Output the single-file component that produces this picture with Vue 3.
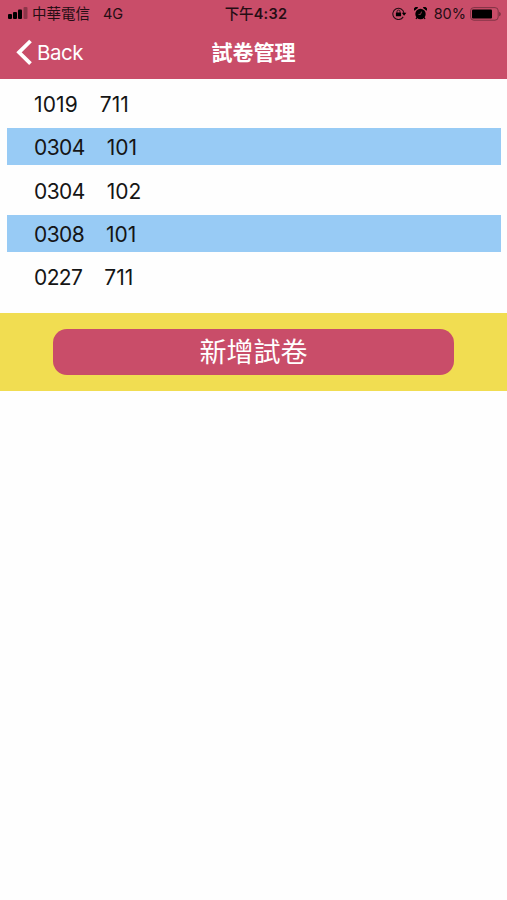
<template>
  <div class="screen">
    <header class="header">
      <div class="status-bar">
        <div class="status-left">
          <svg class="signal" width="20" height="13" viewBox="0 0 20 13">
            <rect x="0" y="7" width="4" height="5" rx="1" />
            <rect x="5" y="5" width="4" height="7" rx="1" />
            <rect x="10" y="2.5" width="4" height="9.5" rx="1" />
            <rect x="15.5" y="0" width="4" height="12" rx="1" opacity="0.3" />
          </svg>
          <span class="carrier">中華電信</span>
          <span class="network">4G</span>
        </div>
        <div class="status-time">下午<span class="clock">4:32</span></div>
        <div class="status-right">
          <svg class="lock" width="15" height="13" viewBox="0 0 15 13">
            <path
              d="M11.2 9.9A5.6 5.6 0 1 1 12 6.2"
              fill="none"
              stroke="#250d14"
              stroke-width="1.1"
            />
            <path d="M9.8 5.8h4.6L12.1 8.8z" />
            <rect x="3.9" y="5.6" width="5.2" height="3.7" rx="0.5" />
            <path
              d="M5 6V4.6a1.5 1.5 0 0 1 3 0V6"
              fill="none"
              stroke="#250d14"
              stroke-width="0.9"
            />
          </svg>
          <svg class="alarm" width="13" height="13" viewBox="0 0 13 13">
            <circle cx="6.5" cy="7" r="5.2" />
            <path d="M0.5 3.8A2.3 2.3 0 0 1 4.2 0.8zM12.5 3.8A2.3 2.3 0 0 0 8.8 0.8z" />
            <path d="M3 10.4l-1 1.6M10 10.4l1 1.6" stroke="#000" stroke-width="1.2" />
            <path d="M7.6 4.6L6.5 7.4H4.5" fill="none" stroke="#c94d69" stroke-width="0.7" />
          </svg>
          <span class="percent">80%</span>
          <svg class="battery" width="32" height="14" viewBox="0 0 32 14">
            <rect
              x="0.6"
              y="0.6"
              width="27.6"
              height="12.6"
              rx="3.2"
              fill="none"
              stroke="#76303f"
              stroke-width="0.9"
            />
            <rect x="2" y="2.4" width="20" height="9" rx="1" fill="#000" />
            <path d="M29.2 4.7c2 0.8 2 3.8 0 4.6z" fill="#76303f" />
          </svg>
        </div>
      </div>

      <nav class="nav-bar">
        <button class="back-button" type="button">
          <svg width="17" height="27" viewBox="0 0 17 27">
            <path d="M14.5 2L3 13.3L14.5 24.6" fill="none" stroke="#fff" stroke-width="3.8" />
          </svg>
          <span>Back</span>
        </button>
        <h1 class="title">試卷管理</h1>
      </nav>
    </header>

    <ul class="paper-list">
      <li
        v-for="(paper, index) in papers"
        :key="index"
        class="paper-item"
        :class="{ striped: index % 2 === 1 }"
      >
        <span class="date">{{ paper.date }}</span>
        <span>{{ paper.room }}</span>
      </li>
    </ul>

    <div class="footer">
      <button class="add-button" type="button">新增試卷</button>
    </div>
  </div>
</template>

<script setup>
import { ref } from 'vue'

const papers = ref([
  { date: '1019', room: '711' },
  { date: '0304', room: '101' },
  { date: '0304', room: '102' },
  { date: '0308', room: '101' },
  { date: '0227', room: '711' }
])
</script>

<style>
body {
  background-color: #fefefe;
}
</style>

<style scoped>
.screen {
  min-height: 900px;
  background-color: #fefefe;
  font-family: Inter, 'Noto Sans CJK TC', sans-serif;
}

.header {
  height: 79px;
  background-color: #c94d69;
}

.status-bar {
  display: grid;
  grid-template-columns: 1fr auto 1fr;
  align-items: center;
  height: 27px;
  padding: 0 5px 0 8px;
  font-size: 14.5px;
  line-height: 27px;
  color: #250d14;
}

.status-left,
.status-right {
  display: flex;
  align-items: center;
}

.status-right {
  justify-content: flex-end;
}

.carrier {
  margin-left: 4px;
}

.network {
  margin-left: 13px;
}

.status-time {
  padding-left: 2px;
  font-weight: 500;
}

.clock {
  font-weight: 600;
  letter-spacing: 0.3px;
}

.alarm {
  margin-left: 7px;
}

.percent {
  margin-left: 7px;
}

.battery {
  margin-left: 4px;
}

.nav-bar {
  display: grid;
  grid-template-columns: 1fr auto 1fr;
  align-items: center;
  height: 50px;
  color: #fff;
}

.back-button {
  display: flex;
  align-items: center;
  gap: 4px;
  padding: 0 0 0 16px;
  border: none;
  background: none;
  color: #fff;
  font-family: inherit;
  font-size: 20.5px;
  letter-spacing: -0.5px;
}

.title {
  margin: 0;
  padding-top: 2px;
  font-size: 21px;
  font-weight: 600;
  line-height: 48px;
}

.paper-list {
  display: flex;
  flex-direction: column;
  gap: 6.2px;
  margin: 0;
  padding: 6.3px 6px 17.9px 7px;
  list-style: none;
}

.paper-item {
  display: flex;
  align-items: center;
  gap: 22px;
  box-sizing: border-box;
  height: 37px;
  padding: 2px 0 0 27px;
  font-size: 21px;
  line-height: 35px;
  color: #151515;
}

.date {
  letter-spacing: -0.6px;
}

.paper-item:first-child .date {
  letter-spacing: 0.1px;
}

.striped {
  background-color: #98cbf5;
}

.footer {
  display: flex;
  justify-content: center;
  align-items: center;
  height: 78px;
  background-color: #f1dd51;
}

.add-button {
  width: 401px;
  height: 46px;
  border: none;
  border-radius: 14px;
  background-color: #c94d69;
  color: #fff;
  font-family: inherit;
  font-size: 27px;
  line-height: 44px;
  padding: 2px 0 0;
}
</style>
